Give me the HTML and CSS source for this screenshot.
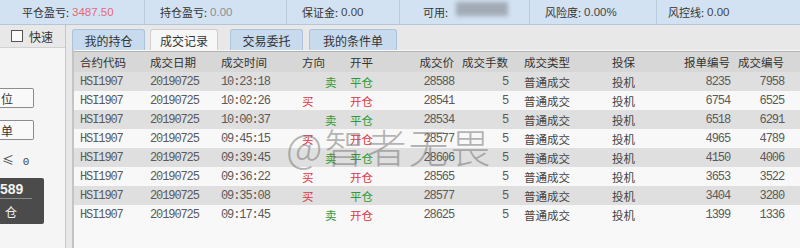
FILE: index.html
```html
<!DOCTYPE html>
<html lang="zh-CN">
<head>
    <meta charset="UTF-8">
    <meta name="viewport" content="width=device-width, initial-scale=1.0">
    <title>成交记录</title>
    <link rel="stylesheet" href="styles.css">
</head>
<body>
    <header class="topbar">
        <div class="stat"><span class="label">平仓盈亏:</span><span class="val red">3487.50</span></div>
        <div class="stat"><span class="label">持仓盈亏:</span><span class="val">0.00</span></div>
        <div class="stat"><span class="label">保证金:</span><span class="val dark">0.00</span></div>
        <div class="stat"><span class="label">可用:</span><span class="masked"></span></div>
        <div class="stat"><span class="label">风险度:</span><span class="val dark">0.00%</span></div>
        <div class="stat"><span class="label">风控线:</span><span class="val dark">0.00</span></div>
    </header>

    <div class="main">
        <aside class="side">
            <label class="quick"><span class="box"></span>快速</label>
            <div class="side-body">
                <button class="side-btn first">位</button>
                <button class="side-btn">单</button>
                <div class="side-count">≤ <span>0</span></div>
                <div class="price-box">
                    <div class="price">589</div>
                    <div class="price-act">仓</div>
                </div>
            </div>
        </aside>

        <section class="trades">
            <nav class="tabs">
                <div class="tab">我的持仓</div>
                <div class="tab active">成交记录</div>
                <div class="tab">交易委托</div>
                <div class="tab">我的条件单</div>
            </nav>

            <div class="grid">
                <div class="row head">
                    <div>合约代码</div><div>成交日期</div><div>成交时间</div><div>方向</div><div>开平</div>
                    <div class="num">成交价</div><div class="num">成交手数</div><div>成交类型</div><div>投保</div>
                    <div class="num">报单编号</div><div class="num">成交编号</div>
                </div>
                <div id="rows"></div>
            </div>

            <div class="watermark">@智者无畏</div>
        </section>
    </div>

    <script>
        const trades = [
            ['10:23:18', 'sell', 'close', 28588, 8235, 7958],
            ['10:02:26', 'buy',  'open',  28541, 6754, 6525],
            ['10:00:37', 'sell', 'close', 28534, 6518, 6291],
            ['09:45:15', 'buy',  'open',  28577, 4965, 4789],
            ['09:39:45', 'sell', 'close', 28606, 4150, 4006],
            ['09:36:22', 'buy',  'open',  28565, 3653, 3522],
            ['09:35:08', 'buy',  'close', 28577, 3404, 3280],
            ['09:17:45', 'sell', 'open',  28625, 1399, 1336]
        ];

        const rows = document.getElementById('rows');

        trades.forEach(([time, side, offset, price, orderNo, tradeNo]) => {
            const dir = side === 'buy' ? '<div class="dir red">买</div>' : '<div class="dir sell green">卖</div>';
            const oc = offset === 'open' ? '<div class="red">开仓</div>' : '<div class="green">平仓</div>';
            rows.innerHTML += `
                <div class="row">
                    <div class="mono">HSI1907</div><div class="mono">20190725</div><div class="mono">${time}</div>
                    ${dir}${oc}
                    <div class="num mono">${price}</div><div class="num mono">5</div>
                    <div>普通成交</div><div>投机</div>
                    <div class="num mono">${orderNo}</div><div class="num mono">${tradeNo}</div>
                </div>`;
        });
    </script>
</body>
</html>
```

FILE: styles.css
```css
* {
    margin: 0;
    padding: 0;
    box-sizing: border-box;
}

body {
    font-family: 'Noto Sans CJK SC', 'Noto Sans', sans-serif;
    font-size: 11.5px;
    color: #333;
    background: #e8e8e8;
    width: 800px;
    height: 248px;
    overflow: hidden;
}

/* top account bar */
.topbar {
    display: grid;
    grid-template-columns: 145px 142px 113px 130px 127px 1fr;
    height: 25px;
    background: #d2e2f2;
    border-bottom: 1px solid #b4c6d8;
}

.stat {
    display: flex;
    align-items: center;
    padding-left: 15px;
    border-right: 1px solid #b9cbdd;
    font-size: 11px;
}

.stat:first-child { padding-left: 22px; }
.stat:nth-child(4) { padding-left: 23px; }
.stat:last-child { padding-left: 11px; border-right: none; }

.label { color: #333; }

.val {
    margin-left: 3px;
    font-family: 'Liberation Sans', Arial, sans-serif;
    font-size: 11.5px;
    color: #8a8f96;
}

.val.red { color: #e8687a; }
.val.dark { color: #444; }

.masked {
    width: 52px;
    height: 14px;
    margin-left: 8px;
    margin-top: -6px;
    background: #a2abb5;
    filter: blur(2px);
}

/* layout under the bar */
.main {
    display: flex;
    height: 223px;
}

.side {
    width: 66px;
    border-right: 1px solid #c6c6c6;
    display: flex;
    flex-direction: column;
    margin-right: 6px;
}

.quick {
    height: 22px;
    display: flex;
    align-items: center;
    padding-left: 11px;
    gap: 6px;
    font-size: 12px;
    color: #333;
}

.box {
    width: 12px;
    height: 12px;
    border: 1px solid #555;
    background: #fafafa;
}

.side-body {
    flex: 1;
    background: #f5f5f5;
    border-top: 1px solid #d2d2d2;
    display: flex;
    flex-direction: column;
    align-items: flex-start;
}

.side-btn {
    width: 34px;
    height: 20px;
    margin-top: 12px;
    border: 1px solid #8c8c8c;
    border-left: none;
    border-radius: 0 2px 2px 0;
    background: #f9f9f9;
    font-family: inherit;
    font-size: 12px;
    color: #333;
    text-align: left;
    padding-left: 1px;
}

.side-btn.first { margin-top: 40px; }

.side-count {
    margin-top: 13px;
    padding-left: 2px;
    font-size: 12px;
    line-height: 14px;
    color: #444;
}

.side-count span {
    margin-left: 6px;
    font-family: 'Liberation Mono', monospace;
    font-size: 11px;
}

.price-box {
    width: 44px;
    height: 46px;
    margin-top: 9px;
    background: #4b4b4b;
    border-radius: 0 2px 2px 0;
    color: #f2f2f2;
}

.price {
    height: 21px;
    padding-top: 3px;
    width: 32px;
    border-bottom: 1px solid #8a8a8a;
    font-family: 'Liberation Sans', Arial, sans-serif;
    font-weight: bold;
    font-size: 14px;
    line-height: 16px;
}

.price-act {
    padding: 4px 0 0 5px;
    font-size: 12px;
}

/* trade list */
.trades {
    flex: 1;
    position: relative;
    display: flex;
    flex-direction: column;
}

.tabs {
    height: 25px;
    display: flex;
    align-items: flex-end;
}

.tab {
    height: 21px;
    width: 73px;
    margin-right: 5px;
    display: flex;
    align-items: center;
    justify-content: center;
    background: #c8dbee;
    border: 1px solid #adc3d9;
    border-bottom: none;
    border-radius: 3px 3px 0 0;
    font-size: 12px;
    color: #333;
}

.tab.active {
    width: 68px;
    margin-right: 12px;
    background: #f7f7f7;
    border-color: #cfcfcf;
}

.tab:nth-child(3) { margin-right: 6px; }
.tab:last-child { width: 88px; }

.grid {
    flex: 1;
    background: #f8f8f8;
    border-left: 2px solid #c4c4c4;
    padding-top: 1px;
}

.row {
    display: grid;
    grid-template-columns: 72px 71px 81px 48px 54px 58px 62px 88px 72px 54px 54px;
    height: 19px;
    align-items: center;
    color: #444;
}

.row > div {
    padding: 0 4px;
    white-space: nowrap;
}

.row > div:first-child { padding-left: 6px; }
.row > div:nth-child(7) { padding-right: 12px; }

.row.head {
    height: 21px;
    background: #d7d7d7;
    border-top: 1px solid #b2b2b2;
    color: #333;
}

#rows .row:nth-child(odd) { background: #dfdfdf; }

.num { text-align: right; }

.mono {
    font-family: 'Liberation Mono', 'Courier New', monospace;
    font-size: 12px;
    letter-spacing: -1.1px;
    color: #5a5a5a;
}

.row > .dir.sell { padding-left: 27px; }

.red { color: #e2363f; }
.green { color: #2f9a34; }

.watermark {
    position: absolute;
    left: 214px;
    top: 92px;
    font-size: 40px;
    font-weight: 300;
    letter-spacing: 2px;
    color: rgba(110, 110, 110, 0.5);
    pointer-events: none;
}
```
